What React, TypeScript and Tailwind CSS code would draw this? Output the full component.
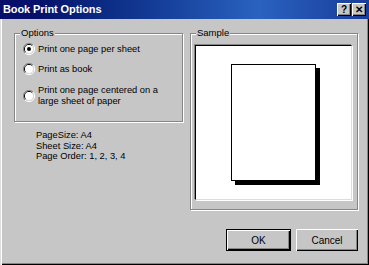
import React from "react";

function Radio({ checked }: { checked?: boolean }) {
  return (
    <svg width="12" height="12" viewBox="0 0 12 12" className="shrink-0">
      <path d="M10 2 A5.5 5.5 0 0 0 2 10" fill="none" stroke="#868686" strokeWidth="1" />
      <path d="M9.2 2.8 A4.5 4.5 0 0 0 2.8 9.2" fill="none" stroke="#000" strokeWidth="1" />
      <path d="M2 10 A5.5 5.5 0 0 0 10 2" fill="none" stroke="#fff" strokeWidth="1" />
      <path d="M2.8 9.2 A4.5 4.5 0 0 0 9.2 2.8" fill="none" stroke="#dcdcdc" strokeWidth="1" />
      <circle cx="6" cy="6" r="4" fill="#fff" />
      {checked && <circle cx="6" cy="6" r="2" fill="#000" />}
    </svg>
  );
}

function CaptionButton({ children }: { children: React.ReactNode }) {
  return (
    <div className="w-[14px] h-[13px] bg-[#c6c6c6] flex items-center justify-center text-[10px] font-bold leading-none text-black shadow-[inset_1px_1px_0_#fff,inset_-1px_-1px_0_#000,inset_-2px_-2px_0_#868686]">
      {children}
    </div>
  );
}

function Group({ label, className, children }: { label: string; className?: string; children?: React.ReactNode }) {
  return (
    <div className={`relative border border-[#868686] shadow-[inset_1px_1px_0_#fff,1px_1px_0_#fff] ${className ?? ""}`}>
      <span className="absolute -top-[7px] left-[5px] px-[1px] bg-[#c6c6c6] text-[9.5px] leading-[12px]">{label}</span>
      {children}
    </div>
  );
}

export default function App() {
  return (
    <div className="w-[369px] h-[265px] bg-[#c6c6c6] text-black font-['Liberation_Sans',Arial,sans-serif] flex flex-col shadow-[inset_1px_1px_0_#dedede,inset_2px_2px_0_#fff,inset_-1px_-1px_0_#000,inset_-2px_-2px_0_#868686]">
      {/* title bar */}
      <div className="h-[19px] flex items-center justify-between pl-[3px] pr-[3px] bg-gradient-to-r from-[#06106a] from-10% via-[#2a62c0] via-70% to-[#1a3c9a]">
        <span className="text-white font-bold text-[11px] tracking-[-0.1px]">Book Print Options</span>
        <div className="flex gap-[1px]">
          <CaptionButton>?</CaptionButton>
          <CaptionButton>✕</CaptionButton>
        </div>
      </div>

      {/* body */}
      <div className="flex gap-[7px] pl-[14px] mt-[14px] h-[177px]">
        <div className="w-[169px] flex flex-col">
          <Group label="Options" className="h-[89px] pl-[8px] pt-[9px] text-[9.3px] leading-[11px]">
            <div className="flex items-center gap-[3px] h-[12px]">
              <Radio checked />
              <span>Print one page per sheet</span>
            </div>
            <div className="flex items-center gap-[3px] h-[12px] mt-[8px]">
              <Radio />
              <span>Print as book</span>
            </div>
            <div className="flex items-center gap-[3px] mt-[10px]">
              <Radio />
              <span>
                Print one page centered on a
                <br />
                large sheet of paper
              </span>
            </div>
          </Group>
          <div className="pl-[22px] pt-[8px] text-[9.3px] leading-[10.5px]">
            <div>PageSize: A4</div>
            <div>Sheet Size: A4</div>
            <div>Page Order: 1, 2, 3, 4</div>
          </div>
        </div>

        <Group label="Sample" className="w-[168px] h-[177px] pl-[4px] pr-[5px] pt-[11px] pb-[9px]">
          <div className="h-full bg-white border border-t-black border-l-black border-r-[#dcdcdc] border-b-[#dcdcdc] shadow-[-1px_-1px_0_#868686,1px_1px_0_#fff] flex items-center justify-center">
            <div className="w-[85px] h-[117px] bg-white border border-black shadow-[4px_4px_0_#000]" />
          </div>
        </Group>
      </div>

      {/* buttons */}
      <div className="flex justify-end gap-[5px] pr-[11px] mt-[19px] text-[10px]">
        <button className="w-[65px] h-[22px] bg-[#c6c6c6] border border-black shadow-[inset_1px_1px_0_#fff,inset_-1px_-1px_0_#000,inset_-2px_-2px_0_#868686] flex items-center justify-center">
          OK
        </button>
        <button className="w-[62px] h-[22px] bg-[#c6c6c6] shadow-[inset_1px_1px_0_#fff,inset_-1px_-1px_0_#000,inset_-2px_-2px_0_#868686] flex items-center justify-center">
          Cancel
        </button>
      </div>
    </div>
  );
}
